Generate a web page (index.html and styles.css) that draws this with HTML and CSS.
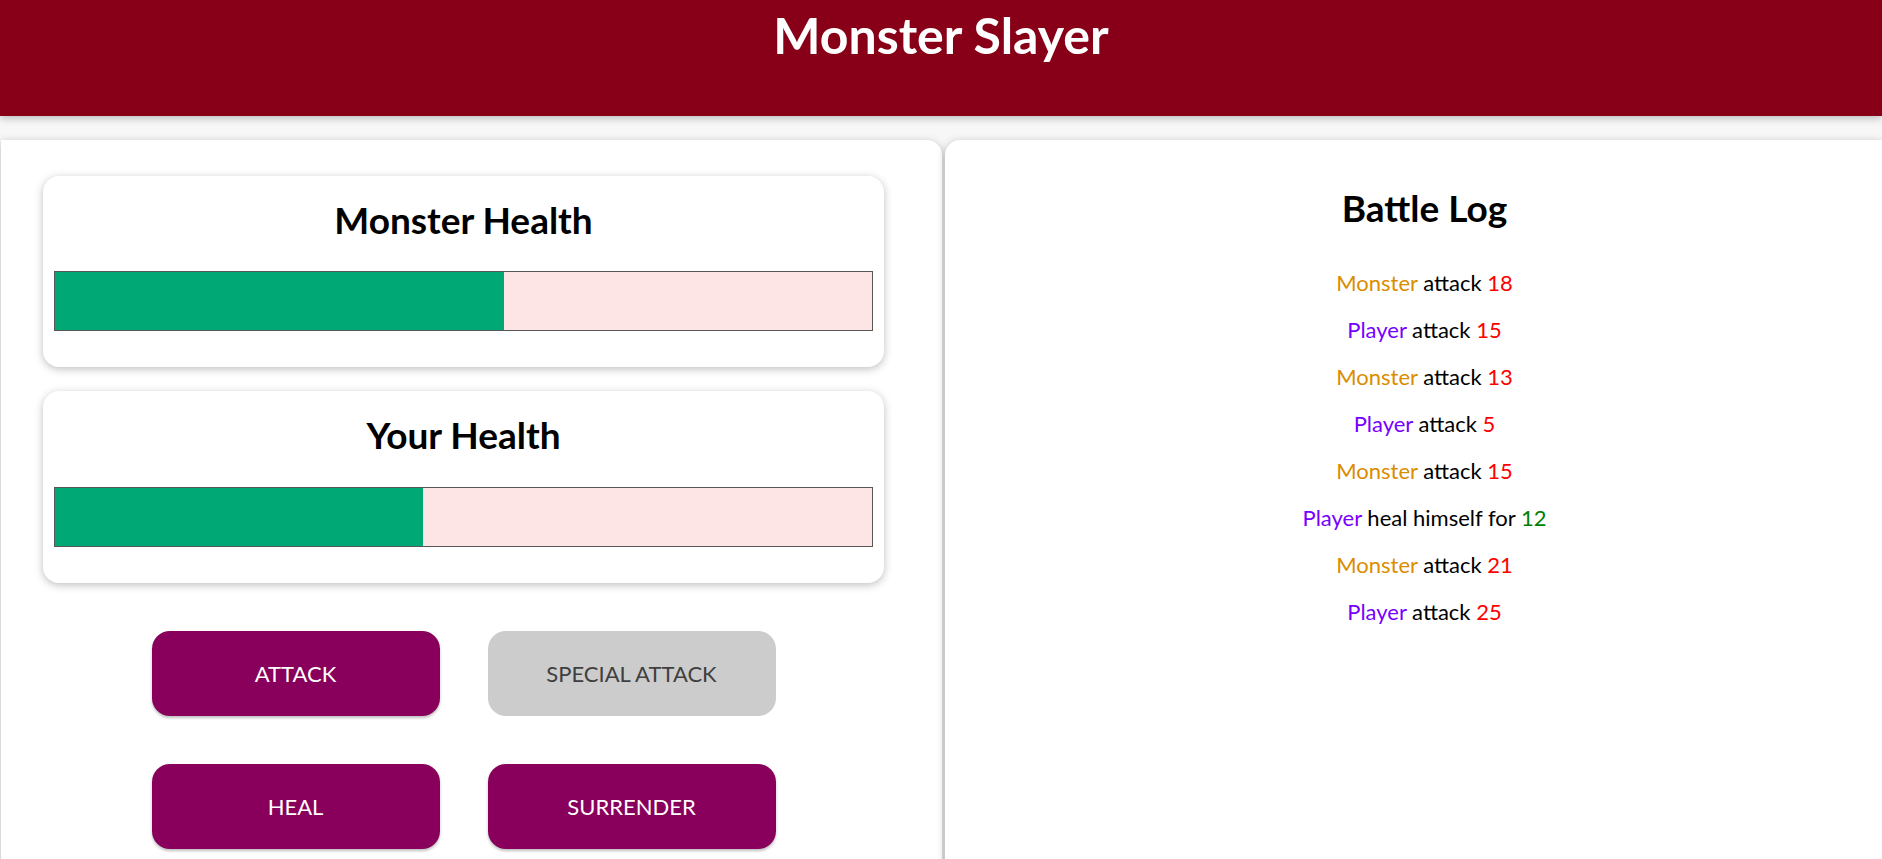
FILE: index.html
```html
<!DOCTYPE html>
<html lang="en">
<head>
<meta charset="utf-8">
<title>Monster Slayer</title>
<link rel="stylesheet" href="styles.css">
</head>
<body>
<header class="topbar">
  <h1 class="title">Monster Slayer</h1>
</header>
<main class="layout">
  <section class="panel panel--game">
    <div class="card">
      <h2 class="card__title">Monster Health</h2>
      <div class="healthbar"><div class="healthbar__value" style="width:55%"></div></div>
    </div>
    <div class="card">
      <h2 class="card__title">Your Health</h2>
      <div class="healthbar"><div class="healthbar__value" style="width:45%"></div></div>
    </div>
    <div class="controls">
      <button class="btn">ATTACK</button>
      <button class="btn" disabled>SPECIAL ATTACK</button>
      <button class="btn">HEAL</button>
      <button class="btn">SURRENDER</button>
    </div>
  </section>
  <section class="panel panel--log">
    <h2 class="log__title">Battle Log</h2>
    <ul class="log__list">
      <li><span class="log--monster">Monster</span> attack <span class="log--damage">18</span></li>
      <li><span class="log--player">Player</span> attack <span class="log--damage">15</span></li>
      <li><span class="log--monster">Monster</span> attack <span class="log--damage">13</span></li>
      <li><span class="log--player">Player</span> attack <span class="log--damage">5</span></li>
      <li><span class="log--monster">Monster</span> attack <span class="log--damage">15</span></li>
      <li><span class="log--player">Player</span> heal himself for <span class="log--heal">12</span></li>
      <li><span class="log--monster">Monster</span> attack <span class="log--damage">21</span></li>
      <li><span class="log--player">Player</span> attack <span class="log--damage">25</span></li>
    </ul>
  </section>
</main>
</body>
</html>
```
FILE: styles.css
```css
html {
  overflow: hidden;
}

body {
  margin: 0;
  font-family: Lato, "Open Sans", sans-serif;
  background: #f7f7f7;
  color: #000;
}

.topbar {
  position: relative;
  z-index: 1;
  height: 116px;
  box-sizing: border-box;
  padding-top: 5px;
  background: #880017;
  color: #fff;
  text-align: center;
  box-shadow: 0 2px 8px rgba(0, 0, 0, 0.26);
}

.title {
  margin: 0;
  font-size: 50px;
  line-height: 1.2;
  font-weight: 700;
}

.layout {
  display: flex;
  gap: 3px;
  margin-top: 24px;
  padding-left: 1px;
}

.panel {
  background: #fff;
  box-shadow: 0 2px 8px rgba(0, 0, 0, 0.26);
  min-height: 760px;
  box-sizing: border-box;
}

.panel--game {
  flex: none;
  width: 941px;
  border-radius: 0 15px 0 0;
  padding: 36px 58px 0 42px;
}

.panel--log {
  flex: 1;
  border-radius: 15px 0 0 0;
  padding: 46px 0 0 22px;
  text-align: center;
}

.card {
  background: #fff;
  border-radius: 16px;
  box-shadow: 0 2px 8px rgba(0, 0, 0, 0.26);
  padding: 22px 11px 36px;
  text-align: center;
}

.card + .card {
  margin-top: 24px;
}

.card__title,
.log__title {
  margin: 0;
  font-size: 37px;
  line-height: 1.2;
  font-weight: 700;
}

.card__title {
  margin-bottom: 29px;
}

.healthbar {
  height: 60px;
  box-sizing: border-box;
  border: 1px solid #575757;
  background: #fde5e5;
}

.healthbar__value {
  height: 100%;
  background: #00a876;
}

.controls {
  display: grid;
  grid-template-columns: repeat(2, 288px);
  gap: 48px;
  justify-content: center;
  margin-top: 48px;
}

.btn {
  height: 85px;
  border: none;
  border-radius: 18px;
  background: #88005b;
  color: #fff;
  font-family: inherit;
  font-size: 22px;
  box-shadow: 0 2px 3px rgba(0, 0, 0, 0.26);
  cursor: pointer;
}

.btn:disabled {
  background: #ccc;
  color: #3f3f3f;
  box-shadow: none;
  cursor: not-allowed;
}

.log__list {
  list-style: none;
  margin: 29px 0 0;
  padding: 0;
  font-size: 22px;
  line-height: 47px;
}

.log--player { color: #7700ff; }
.log--monster { color: #da8d00; }
.log--damage { color: #ff0000; }
.log--heal { color: #008000; }
```
